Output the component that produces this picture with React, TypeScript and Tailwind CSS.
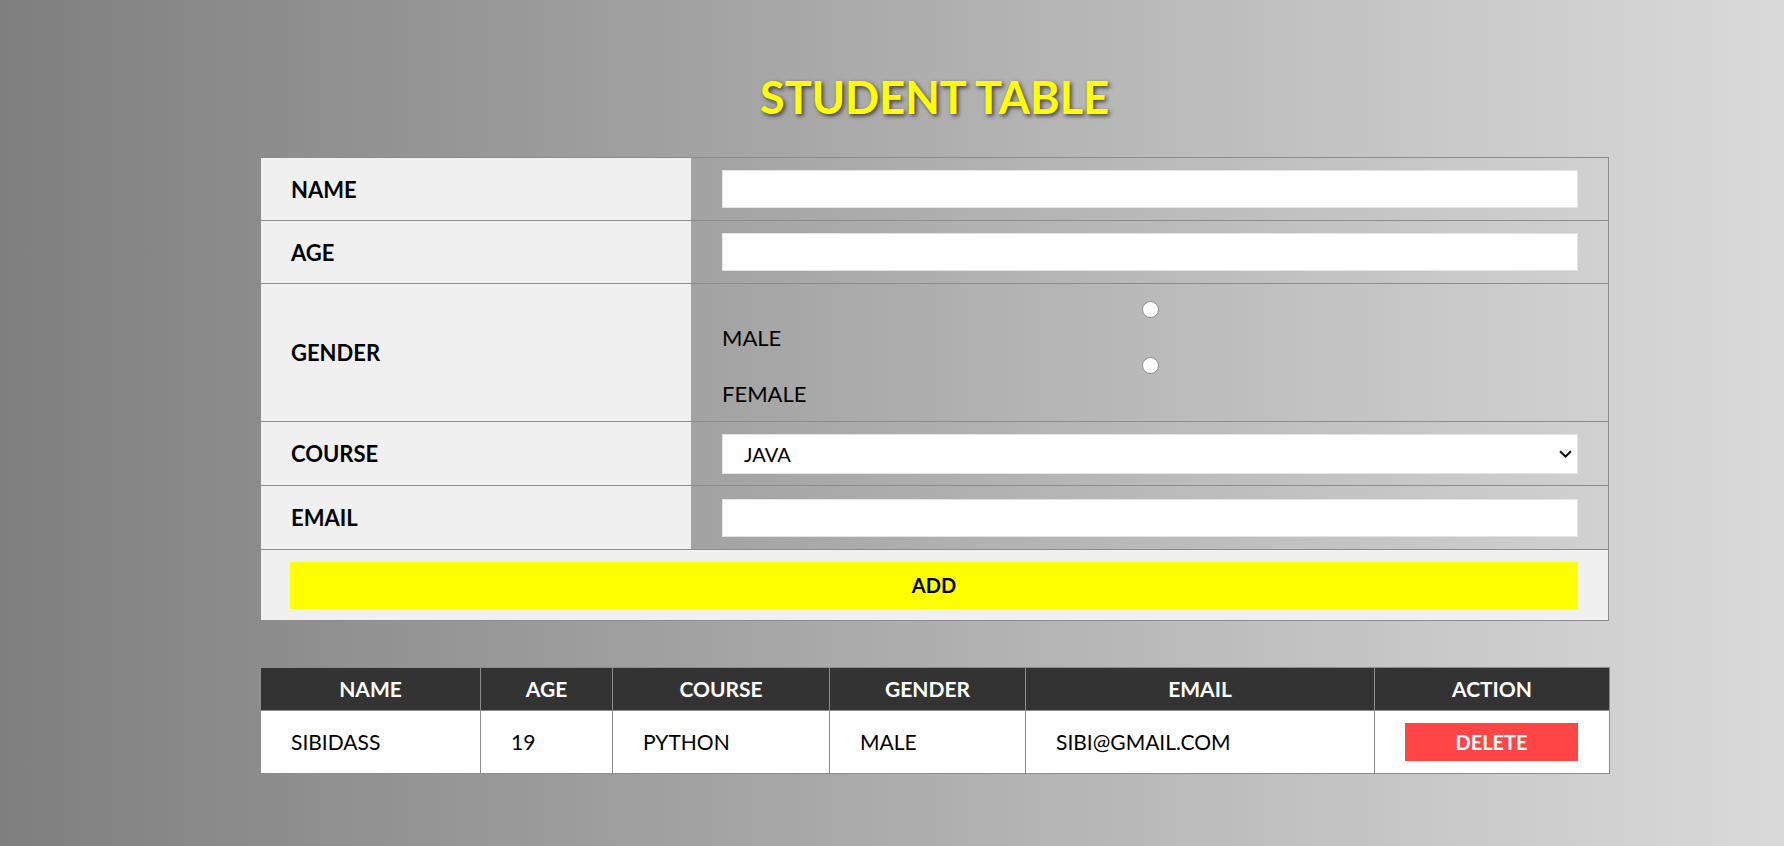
import { useState } from 'react';

interface Student {
  name: string;
  age: string;
  course: string;
  gender: string;
  email: string;
}

const courses = ['JAVA', 'PYTHON', 'C', 'C++', 'JAVASCRIPT'];

export default function App() {
  const [students, setStudents] = useState<Student[]>([
    { name: 'SIBIDASS', age: '19', course: 'PYTHON', gender: 'MALE', email: 'SIBI@GMAIL.COM' },
  ]);
  const [form, setForm] = useState<Student>({ name: '', age: '', course: 'JAVA', gender: '', email: '' });

  const addStudent = (e: React.FormEvent) => {
    e.preventDefault();
    if (!form.name) return;
    setStudents([...students, form]);
    setForm({ name: '', age: '', course: 'JAVA', gender: '', email: '' });
  };

  const removeStudent = (idx: number) => {
    setStudents(students.filter((_, i) => i !== idx));
  };

  return (
    <div className="min-h-screen bg-[linear-gradient(to_right,#7f7f7f,#dadada)] font-[Lato,sans-serif] text-black">
      <div className="ml-[260px] w-[1349px] pt-[70px] pb-[72px]">
        <h1 className="text-center text-[45px] leading-[54px] font-bold text-[#ffff00] [text-shadow:2px_2px_4px_rgba(0,0,0,0.65)]">
          STUDENT TABLE
        </h1>

        {/* Form */}
        <form onSubmit={addStudent} className="mt-[33px] border border-[#8c8c8c]">
          <div className="flex h-[63px] border-b border-[#8c8c8c]">
            <div className="w-[430px] bg-[#f0f0f0] pl-[30px] flex items-center text-[22px] font-bold">NAME</div>
            <div className="flex-1 flex items-center pl-[31px] pr-[30px]">
              <input
                value={form.name}
                onChange={(e) => setForm({ ...form, name: e.target.value })}
                className="w-full h-[38px] bg-white border border-[#e4e4e4] outline-none px-2 text-[20px]"
              />
            </div>
          </div>

          <div className="flex h-[63px] border-b border-[#8c8c8c]">
            <div className="w-[430px] bg-[#f0f0f0] pl-[30px] flex items-center text-[22px] font-bold">AGE</div>
            <div className="flex-1 flex items-center pl-[31px] pr-[30px]">
              <input
                value={form.age}
                onChange={(e) => setForm({ ...form, age: e.target.value })}
                className="w-full h-[38px] bg-white border border-[#e4e4e4] outline-none px-2 text-[20px]"
              />
            </div>
          </div>

          <div className="flex h-[138px] border-b border-[#8c8c8c]">
            <div className="w-[430px] bg-[#f0f0f0] pl-[30px] flex items-center text-[22px] font-bold">GENDER</div>
            <div className="flex-1 flex flex-col pt-[12px] pl-[31px] pr-[30px] text-[22px]">
              <div className="flex h-[26px] items-center justify-center">
                <input
                  type="radio"
                  name="gender"
                  checked={form.gender === 'MALE'}
                  onChange={() => setForm({ ...form, gender: 'MALE' })}
                  className="appearance-none w-[17px] h-[17px] rounded-full border border-[#8a8a8a] bg-white checked:border-[5px] checked:border-[#0075ff]"
                />
              </div>
              <label className="mt-[4px] h-[24px] leading-[24px]">MALE</label>
              <div className="mt-[2px] flex h-[26px] items-center justify-center">
                <input
                  type="radio"
                  name="gender"
                  checked={form.gender === 'FEMALE'}
                  onChange={() => setForm({ ...form, gender: 'FEMALE' })}
                  className="appearance-none w-[17px] h-[17px] rounded-full border border-[#8a8a8a] bg-white checked:border-[5px] checked:border-[#0075ff]"
                />
              </div>
              <label className="mt-[4px] h-[24px] leading-[24px]">FEMALE</label>
            </div>
          </div>

          <div className="flex h-[64px] border-b border-[#8c8c8c]">
            <div className="w-[430px] bg-[#f0f0f0] pl-[30px] flex items-center text-[22px] font-bold">COURSE</div>
            <div className="flex-1 flex items-center pl-[31px] pr-[30px]">
              <div className="relative w-full h-[40px]">
                <select
                  value={form.course}
                  onChange={(e) => setForm({ ...form, course: e.target.value })}
                  className="appearance-none w-full h-full bg-white border border-[#e4e4e4] outline-none pl-[21px] text-[20px]"
                >
                  {courses.map((c) => (
                    <option key={c}>{c}</option>
                  ))}
                </select>
                <svg
                  className="absolute right-[6px] top-[16px] pointer-events-none"
                  width="13"
                  height="8"
                  viewBox="0 0 13 8"
                  fill="none"
                >
                  <path d="M1 1.2L6.5 6.5L12 1.2" stroke="#111" strokeWidth="2" />
                </svg>
              </div>
            </div>
          </div>

          <div className="flex h-[64px] border-b border-[#8c8c8c]">
            <div className="w-[430px] bg-[#f0f0f0] pl-[30px] flex items-center text-[22px] font-bold">EMAIL</div>
            <div className="flex-1 flex items-center pl-[31px] pr-[30px]">
              <input
                value={form.email}
                onChange={(e) => setForm({ ...form, email: e.target.value })}
                className="w-full h-[38px] bg-white border border-[#e4e4e4] outline-none px-2 text-[20px]"
              />
            </div>
          </div>

          <div className="flex h-[70px] items-center bg-[#f0f0f0] pl-[29px] pr-[30px]">
            <button type="submit" className="w-full h-[47px] bg-[#ffff00] text-[20px] font-bold">
              ADD
            </button>
          </div>
        </form>

        {/* Student list */}
        <table className="mt-[46px] w-[1349px] table-fixed border-collapse bg-white text-[21px]">
          <colgroup>
            <col className="w-[220px]" />
            <col className="w-[132px]" />
            <col className="w-[217px]" />
            <col className="w-[196px]" />
            <col className="w-[349px]" />
            <col className="w-[235px]" />
          </colgroup>
          <thead>
            <tr className="h-[43px] bg-[#333333] text-white">
              {['NAME', 'AGE', 'COURSE', 'GENDER', 'EMAIL', 'ACTION'].map((h) => (
                <th key={h} className="border border-[#8c8c8c] text-center font-bold">
                  {h}
                </th>
              ))}
            </tr>
          </thead>
          <tbody>
            {students.map((s, i) => (
              <tr key={i} className="h-[63px]">
                <td className="border border-[#8c8c8c] pl-[30px]">{s.name}</td>
                <td className="border border-[#8c8c8c] pl-[30px]">{s.age}</td>
                <td className="border border-[#8c8c8c] pl-[30px]">{s.course}</td>
                <td className="border border-[#8c8c8c] pl-[30px]">{s.gender}</td>
                <td className="border border-[#8c8c8c] pl-[30px]">{s.email}</td>
                <td className="border border-[#8c8c8c] px-[30px]">
                  <button
                    onClick={() => removeStudent(i)}
                    className="w-[173px] h-[38px] bg-[#ff4545] text-white font-bold text-[20px]"
                  >
                    DELETE
                  </button>
                </td>
              </tr>
            ))}
          </tbody>
        </table>
      </div>
    </div>
  );
}
